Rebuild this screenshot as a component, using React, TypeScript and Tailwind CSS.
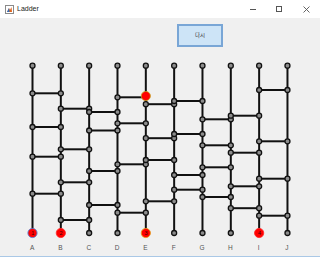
const COLS = ["A", "B", "C", "D", "E", "F", "G", "H", "I", "J"];
const X0 = 32.5;
const STEP = 28.33;
const TOP = 65.7;
const BOTTOM = 233;

// rung heights between column i and i+1
const RUNGS: number[][] = [
  [93.3, 127, 156.7, 193.7],
  [108.7, 149.3, 182.3, 220],
  [112, 130.5, 171, 205],
  [97.3, 123.3, 164.3, 212.7],
  [104.2, 138.2, 160, 201.3],
  [101, 134, 175, 189.7],
  [119.3, 145.3, 167.3, 197],
  [115.7, 152.7, 186.3, 208.2],
  [90, 141.3, 178.7, 215.7],
];

const PLAYERS = [
  { col: 0, label: "1", ring: "#5b7fd0" },
  { col: 1, label: "2", ring: "#ff2a2a" },
  { col: 4, label: "3", ring: "#e69a1a" },
  { col: 8, label: "4", ring: "#ff2a2a" },
];

const colX = (i: number) => X0 + i * STEP;

const Dot = ({ x, y }: { x: number; y: number }) => (
  <circle cx={x} cy={y} r={2.5} fill="#8c8c8c" stroke="#111" strokeWidth={1.3} />
);

const Ladder = () => {
  const dots: { x: number; y: number }[] = [];
  COLS.forEach((_, i) => {
    dots.push({ x: colX(i), y: TOP }, { x: colX(i), y: BOTTOM });
  });
  RUNGS.forEach((ys, i) =>
    ys.forEach((y) => {
      dots.push({ x: colX(i), y }, { x: colX(i + 1), y });
    })
  );

  return (
    <svg width={320} height={182} viewBox="0 58 320 182" className="mt-[11px] block">
      {COLS.map((c, i) => (
        <line key={c} x1={colX(i)} y1={TOP} x2={colX(i)} y2={BOTTOM} stroke="#111" strokeWidth={2} />
      ))}
      {RUNGS.map((ys, i) =>
        ys.map((y) => (
          <line key={`${i}-${y}`} x1={colX(i)} y1={y} x2={colX(i + 1)} y2={y} stroke="#111" strokeWidth={2} />
        ))
      )}
      {dots.map((d, k) => (
        <Dot key={k} x={d.x} y={d.y} />
      ))}
      <circle cx={colX(4)} cy={96} r={4.6} fill="#ff0000" stroke="#c9a21e" strokeWidth={0.8} />
      {PLAYERS.map((p) => (
        <g key={p.label}>
          <circle cx={colX(p.col)} cy={BOTTOM} r={4.6} fill="#ff0000" stroke={p.ring} strokeWidth={0.9} />
          <text
            x={colX(p.col) + 0.3}
            y={BOTTOM + 2}
            fontSize={5.5}
            textAnchor="middle"
            fill="#3a0000"
            fontFamily="'Liberation Sans', sans-serif"
          >
            {p.label}
          </text>
        </g>
      ))}
    </svg>
  );
};

export default function App() {
  return (
    <div className="flex h-[257px] w-[320px] flex-col overflow-hidden border-b border-[#aac8e6] bg-[#f0f0f0] font-['Liberation_Sans','Noto_Sans_CJK_KR',sans-serif]">
      <div className="flex h-[18px] shrink-0 items-center bg-white">
        <svg width={9} height={9} viewBox="0 0 9 9" className="ml-[5px]">
          <rect x={0.5} y={0.5} width={8} height={8} fill="#fff" stroke="#8a8a8a" />
          <path d="M2 7 L4 3 L5 5 L6.5 2 L7 7 Z" fill="#e0661f" />
          <path d="M2 7 L4 3 L4.5 7 Z" fill="#2a6fc0" />
        </svg>
        <span className="ml-[3px] text-[7px] text-[#222]">Ladder</span>
        <div className="ml-auto flex items-center">
          <div className="flex w-[26px] justify-center">
            <div className="h-px w-[6px] bg-[#555]" />
          </div>
          <div className="flex w-[26px] justify-center">
            <div className="h-[6px] w-[6px] border border-[#555]" />
          </div>
          <div className="flex w-[28px] justify-center">
            <svg width={7} height={7} viewBox="0 0 7 7">
              <path d="M0.5 0.5 L6.5 6.5 M6.5 0.5 L0.5 6.5" stroke="#555" strokeWidth={0.9} />
            </svg>
          </div>
        </div>
      </div>

      <div className="pt-[6px]">
        <button className="ml-[177px] flex h-[23px] w-[46px] items-center justify-center border-2 border-[#79a6d6] bg-[#cde4f7] text-[5.5px] text-[#333]">
          다시
        </button>
      </div>

      <Ladder />

      <div className="ml-[18px] grid h-[16px] w-[283px] grid-cols-10 items-center">
        {COLS.map((c) => (
          <span key={c} className="text-center text-[6.5px] text-[#555]">
            {c}
          </span>
        ))}
      </div>
    </div>
  );
}
